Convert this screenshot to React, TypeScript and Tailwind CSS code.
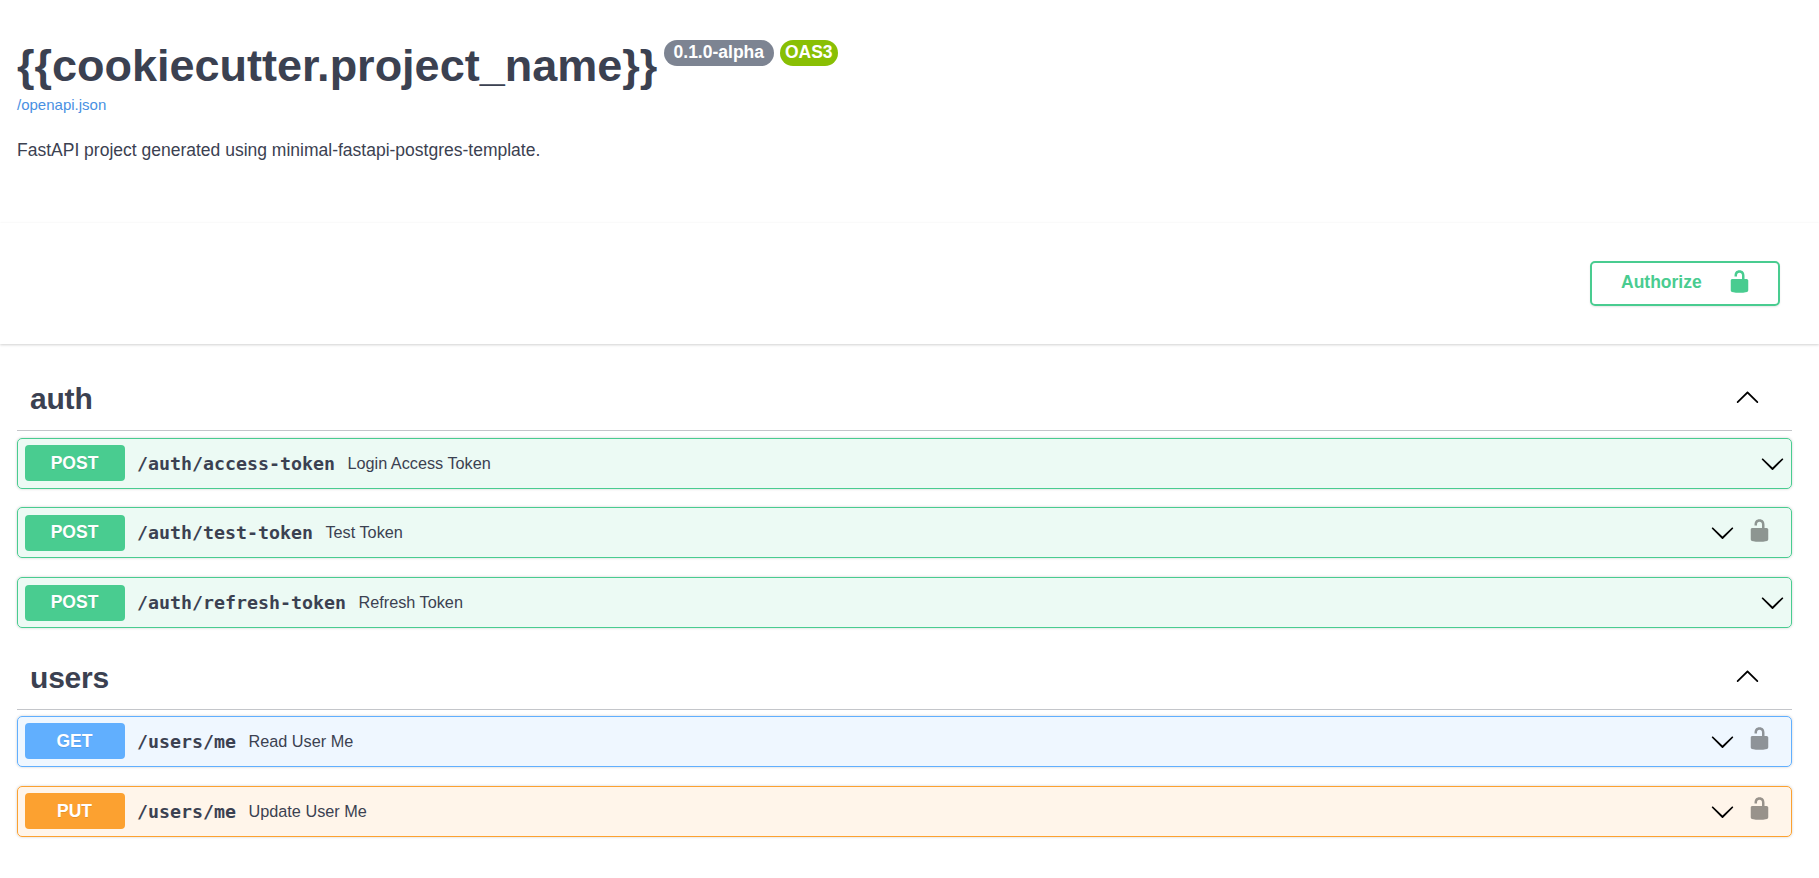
import React from "react";

type Method = "POST" | "GET" | "PUT";

interface Operation {
  method: Method;
  path: string;
  summary: string;
  locked?: boolean;
  row?: string;
  badge: string;
  lock?: string;
}

interface Section {
  name: string;
  header: string;
  operations: Operation[];
}

const sections: Section[] = [
  {
    name: "auth",
    header: "mt-[21px] mb-[7px]",
    operations: [
      { method: "POST", path: "/auth/access-token", summary: "Login Access Token", badge: "mt-1.5 leading-[36px]" },
      { method: "POST", path: "/auth/test-token", summary: "Test Token", locked: true, row: "mt-[18px]", badge: "mt-[7px] leading-[34px]", lock: "mt-2.5" },
      { method: "POST", path: "/auth/refresh-token", summary: "Refresh Token", row: "mt-[19px]", badge: "mt-[7px] leading-[34px]" },
    ],
  },
  {
    name: "users",
    header: "mt-4 mb-1.5",
    operations: [
      { method: "GET", path: "/users/me", summary: "Read User Me", locked: true, badge: "mt-1.5 leading-[36px]", lock: "mt-[9px]" },
      { method: "PUT", path: "/users/me", summary: "Update User Me", locked: true, row: "mt-[19px]", badge: "mt-1.5 leading-[36px]", lock: "mt-[9px]" },
    ],
  },
];

const blockColors: Record<Method, string> = {
  POST: "border-[#49cc90] bg-[#49cc90]/10",
  GET: "border-[#61affe] bg-[#61affe]/10",
  PUT: "border-[#fca130] bg-[#fca130]/10",
};

const badgeColors: Record<Method, string> = {
  POST: "bg-[#49cc90]",
  GET: "bg-[#61affe]",
  PUT: "bg-[#fca130]",
};

function UnlockedIcon({ className }: { className: string }) {
  return (
    <svg viewBox="0 0 20 20" width="25" height="25" fill="currentColor" className={className}>
      <path d="M15.8 8H14V5.6C14 2.703 12.665 1 10 1 7.334 1 6 2.703 6 5.6V6h2v-.801C8 3.754 8.797 3 10 3c1.203 0 2 .754 2 2.199V8H4c-.553 0-1 .646-1 1.199V17c0 .549.428 1.139.951 1.307l1.197.387C5.672 18.861 6.55 19 7.1 19h5.8c.549 0 1.428-.139 1.951-.307l1.196-.387c.524-.167.953-.757.953-1.306V9.199C17 8.646 16.352 8 15.8 8z" />
    </svg>
  );
}

function ArrowUp({ className }: { className: string }) {
  return (
    <svg viewBox="0 0 20 20" width="25" height="25" className={className}>
      <path d="M17.418 14.908c.272.268.709.268.979 0s.271-.701 0-.969l-7.908-7.83c-.27-.268-.707-.268-.979 0l-7.908 7.83c-.27.268-.27.701 0 .969.271.268.709.268.979 0L10 7.767l7.418 7.141z" />
    </svg>
  );
}

function ArrowDown({ className }: { className: string }) {
  return (
    <svg viewBox="0 0 20 20" width="25" height="25" className={className}>
      <path d="M17.418 6.109c.272-.268.709-.268.979 0s.271.701 0 .969l-7.908 7.83c-.27.268-.707.268-.979 0l-7.908-7.83c-.27-.268-.27-.701 0-.969.271-.268.709-.268.979 0L10 13.25l7.418-7.141z" />
    </svg>
  );
}

function OperationRow({ op }: { op: Operation }) {
  return (
    <div
      className={`flex h-[51px] items-start rounded-[5px] border pl-[7px] shadow-[0_0_3px_rgba(0,0,0,0.19)] ${op.row ?? ""} ${blockColors[op.method]}`}
    >
      <span
        className={`h-9 w-[100px] shrink-0 rounded-[4px] pr-px text-center text-[17.5px] font-bold text-white [text-shadow:0_1px_0_rgba(0,0,0,0.1)] ${op.badge} ${badgeColors[op.method]}`}
      >
        {op.method}
      </span>
      <div className="flex h-[49px] grow items-center pl-3">
        <span className="font-['DejaVu_Sans_Mono',monospace] text-[18.27px] leading-6 font-bold whitespace-nowrap">
          {op.path}
        </span>
        <span className="pb-0.5 pl-[12.5px] text-[16.25px] leading-6 whitespace-nowrap">{op.summary}</span>
      </div>
      <div className={`flex shrink-0 items-start ${op.locked ? "pr-[19px]" : "pr-1.5"}`}>
        <ArrowDown className="mt-3" />
        {op.locked && <UnlockedIcon className={`ml-3 text-black opacity-40 ${op.lock}`} />}
      </div>
    </div>
  );
}

export default function App() {
  return (
    <div className="min-h-[878px] bg-white font-['Liberation_Sans',Arial,sans-serif] text-[#3b4151]">
      <header className="h-[223px] px-[17px] pt-10">
        <div className="flex items-start">
          <h1 className="text-[45px] leading-[51px] font-bold whitespace-nowrap">{"{{cookiecutter.project_name}}"}</h1>
          <span className="ml-[7px] h-[26px] w-[110px] rounded-full bg-[#7d8492] pr-px text-center text-[17.5px] leading-6 font-bold text-white">
            0.1.0-alpha
          </span>
          <span className="ml-1.5 h-[26px] w-[58px] rounded-full bg-[#89bf04] pr-px text-center text-[17.5px] leading-6 font-bold text-white">
            OAS3
          </span>
        </div>
        <a className="mt-[3px] block text-[15px] leading-[22px] text-[#4990e2]">/openapi.json</a>
        <p className="mt-[22px] text-[17.5px] leading-6">
          FastAPI project generated using minimal-fastapi-postgres-template.
        </p>
      </header>

      <section className="flex h-[121px] justify-end pt-[38px] pr-[39px] shadow-[0_1.25px_2.5px_rgba(0,0,0,0.18)]">
        <button className="flex h-[45px] w-[190px] rounded-[5px] border-2 border-[#49cc90] pl-[29px] text-[#49cc90] shadow-[0_1px_2px_rgba(0,0,0,0.1)]">
          <span className="w-[106px] text-left text-[17.5px] leading-[38px] font-bold">Authorize</span>
          <UnlockedIcon className="mt-[6px]" />
        </button>
      </section>

      <main className="pr-[27px] pl-[17px]">
        {sections.map((section) => (
          <section key={section.name}>
            <div
              className={`flex h-[66px] items-start justify-between border-b border-[#3b4151]/30 pr-8 pl-[13px] ${section.header}`}
            >
              <h2 className="mt-4 text-[30px] leading-9 font-bold tracking-[-0.2px]">{section.name}</h2>
              <ArrowUp className="mt-[19px]" />
            </div>
            {section.operations.map((op) => (
              <OperationRow key={op.method + op.path} op={op} />
            ))}
          </section>
        ))}
      </main>
    </div>
  );
}
